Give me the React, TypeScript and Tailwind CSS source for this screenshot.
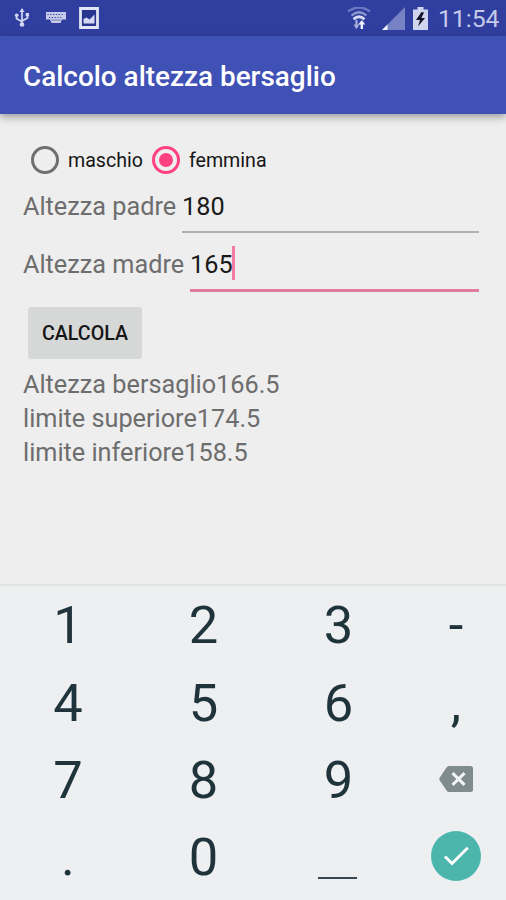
import { useState } from 'react';
import clsx from 'clsx';

const results = [
  { label: 'Altezza bersaglio', value: '166.5' },
  { label: 'limite superiore', value: '174.5' },
  { label: 'limite inferiore', value: '158.5' },
];

const keys = ['1', '2', '3', '-', '4', '5', '6', ',', '7', '8', '9', 'del', '.', '0', '_', 'ok'];

function StatusBar() {
  return (
    <div className="flex h-9 items-center bg-[#303f9f] text-[#c5cae9]">
      <svg className="ml-[14px] h-5 w-4" viewBox="0 0 16 20" fill="none" stroke="#d3d8f2" strokeWidth="1.7">
        <path d="M8 3v13M2.5 7.5v3L8 13.8M13.5 7v3L8 13" />
        <path d="M8 0 5.5 4h5z" fill="#d3d8f2" stroke="none" />
        <circle cx="2.7" cy="7.2" r="1.8" fill="#d3d8f2" stroke="none" />
        <path d="M11.7 5h3.3v3.3h-3.3z" fill="#d3d8f2" stroke="none" />
        <circle cx="8" cy="16.5" r="2.3" fill="#d3d8f2" stroke="none" />
      </svg>
      <svg className="ml-4 h-3 w-5" viewBox="0 0 20 12">
        <path d="M0 0h20v7.5H16L14.5 11h-9L4 7.5H0z" fill="#c5cae9" />
        <path d="M1.5 2.5h17M3 5.5h14" stroke="#303f9f" strokeWidth="1.1" strokeDasharray="1.2 1.6" />
        <path d="M5 8h10" stroke="#6571b9" strokeWidth=".8" />
      </svg>
      <svg className="ml-[13px] h-[22px] w-5" viewBox="0 0 20 22">
        <path d="M1.5 1.5h17v19h-17z" fill="#27358f" stroke="#e2e5f6" strokeWidth="2.8" />
        <path d="M4.5 16.5v-4.5l3-1.5 3 2 5-5v9z" fill="#d3d8f2" />
      </svg>

      <svg className="ml-auto h-[23px] w-6" viewBox="0 0 24 23" fill="none">
        <path d="M1 4.5Q12-3.5 23 4.5" stroke="#6c78c0" strokeWidth="2.4" />
        <path d="M4.5 8.5Q12 2 19.500 8.5" stroke="#8e98d0" strokeWidth="2.2" />
        <path d="M6.5 12.300Q12 7 17.500 12.300" stroke="#d9ddf3" strokeWidth="2.8" />
        <path d="M9.500 13v8" stroke="#a5aedb" strokeWidth="2.2" />
        <path d="M6.500 17.500h6L9.500 22z" fill="#a5aedb" />
        <path d="M14.800 22v-6" stroke="#eef0fb" strokeWidth="2.4" />
        <path d="M11.300 17.500h7l-3.500-4.500z" fill="#eef0fb" />
      </svg>
      <svg className="ml-[11px] h-[23px] w-[23px]" viewBox="0 0 23 23">
        <path d="M23 0v23H0z" fill="#7782c4" />
        <path d="M5.5 17.5V23H0z" fill="#f1f3fc" />
      </svg>
      <svg className="ml-2 h-[23px] w-[15px]" viewBox="0 0 15 23">
        <path d="M4.5 0h6v2.5H15V23H0V2.5h4.5z" fill="#d0d5ee" />
        <path d="M8.500 5 3 13h4l-2 6.500L12 11H8.300l2.700-5.500z" fill="#101425" />
      </svg>
      <span className="mr-[6px] ml-[10px] w-[62px] pt-[2px] text-[24.700px] leading-9 whitespace-nowrap">11:54</span>
    </div>
  );
}

type RadioProps = { label: string; checked: boolean; onSelect: () => void };

function Radio({ label, checked, onSelect }: RadioProps) {
  return (
    <button type="button" role="radio" aria-checked={checked} onClick={onSelect} className="flex items-center">
      <span
        className={clsx(
          'flex size-[28px] items-center justify-center rounded-full border-3',
          checked ? 'border-[#ff4081]' : 'border-[#6f6f6f]',
        )}
      >
        {checked && <span className="size-[14px] rounded-full bg-[#ff4081]" />}
      </span>
      <span className="ml-[9px] pt-[2px] text-[19.6px] text-[#151515]">{label}</span>
    </button>
  );
}

function Key({ value }: { value: string }) {
  if (value === 'del') {
    return (
      <svg className="mb-[3px] h-[26px] w-[34px]" viewBox="0 0 34 26">
        <path
          d="M10 0h21.5Q34 0 34 2.5v21Q34 26 31.5 26H10Q8.5 26 7.5 24.5L.5 14Q0 13 .5 12L7.5 1.5Q8.5 0 10 0z"
          fill="#808b8e"
        />
        <path d="M13.5 7.2 25.500 18.8M25.500 7.2 13.5 18.8" stroke="#f2f5f6" strokeWidth="3" />
      </svg>
    );
  }
  if (value === 'ok') {
    return (
      <span className="mb-[3px] flex size-[50px] items-center justify-center rounded-full bg-[#4db6ac]">
        <svg className="h-[20px] w-[25px]" viewBox="0 0 25 20" fill="none" stroke="#fff" strokeWidth="2.8">
          <path d="m1 10.5 7 7L23.8 1.7" />
        </svg>
      </span>
    );
  }
  if (value === '_') {
    return <span className="mt-[41px] mr-[2px] h-[2px] w-[39px] bg-[#37474f]" />;
  }
  return <span>{value}</span>;
}

export default function App() {
  const [sex, setSex] = useState('femmina');

  return (
    <div className="flex h-[900px] w-[506px] flex-col overflow-hidden bg-[#eeeeee] font-['Roboto',sans-serif]">
      <StatusBar />
      <header className="flex h-[78px] items-center bg-[#3f51b5] pt-[3px] pl-[23px] text-[27.9px] font-medium text-white shadow-[0_3px_8px_rgba(0,0,0,0.35)]">
        Calcolo altezza bersaglio
      </header>

      <main className="flex-1 px-[23px] pt-[31px] text-[25.25px] text-[#6d6d6d]">
        <div className="flex h-[29px] items-center gap-[9px] pl-2">
          <Radio label="maschio" checked={sex === 'maschio'} onSelect={() => setSex('maschio')} />
          <Radio label="femmina" checked={sex === 'femmina'} onSelect={() => setSex('femmina')} />
        </div>

        <div className="flex h-[59px] pr-1">
          <span className="w-[159px] pt-[16px] leading-[34px] whitespace-nowrap">Altezza padre</span>
          <div className="flex-1 border-b-2 border-[#b0b0b0] pt-[16px] leading-[34px] text-[#1a1a1a]">180</div>
        </div>

        <div className="flex h-[59px] pr-1">
          <span className="w-[167px] pt-[15px] leading-[34px] whitespace-nowrap">Altezza madre</span>
          <div className="flex flex-1 border-b-3 border-[#e07d9f] pt-[15px] leading-[34px] text-[#1a1a1a]">
            165
            <span className="-mt-[2px] -ml-px h-[34px] w-[3px] bg-[#f27ba1]" />
          </div>
        </div>

        <button
          type="button"
          className="mt-[15px] ml-[5px] block h-[52px] w-[114px] rounded-[3px] bg-[#d6d7d7] pt-[2px] text-[19.7px] font-medium text-[#151515]"
        >
          CALCOLA
        </button>

        <div className="mt-[9px] leading-[34.2px]">
          {results.map((r) => (
            <p key={r.label}>
              {r.label}
              {r.value}
            </p>
          ))}
        </div>
      </main>

      <div className="h-[316px] border-t-2 border-[#e0e1e1] bg-[#edeff1] pt-px text-[52.5px] leading-none text-[#1f333b]">
        <div className="grid grid-cols-[136px_135px_135px_100px] grid-rows-[repeat(4,77.3px)]">
          {keys.map((k) => (
            <div key={k} className="flex items-center justify-center">
              <Key value={k} />
            </div>
          ))}
        </div>
      </div>
    </div>
  );
}
